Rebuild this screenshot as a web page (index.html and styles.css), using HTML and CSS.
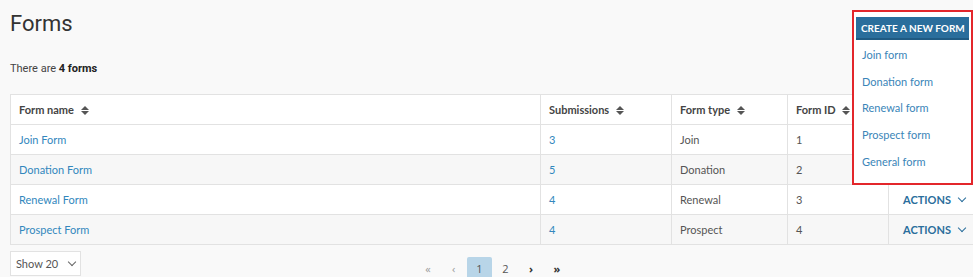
FILE: index.html
```html
<!DOCTYPE html>
<html lang="en">
<head>
    <meta charset="UTF-8">
    <title>Forms</title>
    <link rel="stylesheet" href="styles.css">
</head>
<body>
    <div class="page">
        <div class="top">
            <h1>Forms</h1>
            <div class="new-form">
                <div class="new-form-btn">CREATE A NEW FORM</div>
                <a href="#">Join form</a>
                <a href="#">Donation form</a>
                <a href="#">Renewal form</a>
                <a href="#">Prospect form</a>
                <a href="#">General form</a>
            </div>
        </div>
        <p class="count">There are <strong>4 forms</strong></p>

        <table class="forms">
            <colgroup>
                <col style="width:530px">
                <col style="width:131px">
                <col style="width:116px">
                <col style="width:101px">
                <col style="width:85px">
            </colgroup>
            <thead>
                <tr>
                    <th>Form name <span class="sort"></span></th>
                    <th>Submissions <span class="sort"></span></th>
                    <th>Form type <span class="sort"></span></th>
                    <th>Form ID <span class="sort"></span></th>
                    <th></th>
                </tr>
            </thead>
            <tbody>
                <tr>
                    <td><a href="#">Join Form</a></td>
                    <td><a href="#">3</a></td>
                    <td>Join</td>
                    <td>1</td>
                    <td class="actions">ACTIONS <span class="chev"></span></td>
                </tr>
                <tr>
                    <td><a href="#">Donation Form</a></td>
                    <td><a href="#">5</a></td>
                    <td>Donation</td>
                    <td>2</td>
                    <td class="actions">ACTIONS <span class="chev"></span></td>
                </tr>
                <tr>
                    <td><a href="#">Renewal Form</a></td>
                    <td><a href="#">4</a></td>
                    <td>Renewal</td>
                    <td>3</td>
                    <td class="actions">ACTIONS <span class="chev"></span></td>
                </tr>
                <tr>
                    <td><a href="#">Prospect Form</a></td>
                    <td><a href="#">4</a></td>
                    <td>Prospect</td>
                    <td>4</td>
                    <td class="actions">ACTIONS <span class="chev"></span></td>
                </tr>
            </tbody>
        </table>

        <div class="bottom">
            <div class="show"><span>Show 20</span><span class="chev grey"></span></div>
            <div class="pager">
                <span>&laquo;</span>
                <span>&lsaquo;</span>
                <span class="current">1</span>
                <span class="num">2</span>
                <span class="dark">&rsaquo;</span>
                <span class="dark">&raquo;</span>
            </div>
        </div>
    </div>
</body>
</html>
```

FILE: styles.css
```css
body {
    margin: 0;
    background-color: #f9f9f9;
    font-family: Lato, "Open Sans", Arial, sans-serif;
    color: #555;
    overflow: hidden;
}
.page {
    padding-left: 10px;
    width: 963px;
}
.top {
    position: relative;
    height: 50px;
}
h1 {
    margin: 0;
    padding-top: 11px;
    font-family: Roboto, Arial, sans-serif;
    font-weight: 400;
    font-size: 22px;
    color: #333;
}
.count {
    margin: 12px 0 19px;
    font-family: Roboto, Arial, sans-serif;
    font-size: 11px;
    color: #444;
}
.count strong {
    color: #222;
}
.new-form {
    position: absolute;
    right: 0;
    top: 10px;
    width: 113px;
    height: 166px;
    padding: 5px 2px 0;
    background-color: #fff;
    border: 2px solid #e3262b;
    z-index: 2;
    display: flex;
    flex-direction: column;
}
.new-form-btn {
    background-color: #2a6e9c;
    color: #fff;
    font-size: 10px;
    font-weight: 700;
    height: 21px;
    line-height: 22px;
    padding-left: 5px;
    white-space: nowrap;
    overflow: hidden;
    border-bottom: 2px solid #1f5a82;
}
.new-form a {
    display: block;
    height: 26.7px;
    line-height: 29px;
    padding-left: 6px;
    font-size: 11px;
    color: #3a85b8;
    text-decoration: none;
}
a {
    color: #3287bd;
    text-decoration: none;
}
.forms {
    width: 963px;
    border-collapse: collapse;
    table-layout: fixed;
    background-color: #fff;
    font-size: 11px;
}
.forms th,
.forms td {
    border: 1px solid #e2e2e2;
    height: 29px;
    padding: 0 8px;
    text-align: left;
    white-space: nowrap;
}
.forms th {
    font-weight: 700;
    color: #444;
}
.forms tbody tr:nth-child(even) td {
    background-color: #f7f7f7;
}
.forms td.actions {
    padding-left: 14px;
    font-weight: 700;
    color: #2a6e9c;
}
.sort {
    display: inline-block;
    position: relative;
    width: 8px;
    height: 9px;
    margin-left: 4px;
    vertical-align: -1px;
}
.sort::before,
.sort::after {
    content: "";
    position: absolute;
    left: 0;
    border-left: 4px solid transparent;
    border-right: 4px solid transparent;
}
.sort::before {
    top: 0;
    border-bottom: 4px solid #555;
}
.sort::after {
    bottom: 0;
    border-top: 4px solid #555;
}
.chev {
    display: inline-block;
    width: 5px;
    height: 5px;
    margin-left: 5px;
    border-right: 1.5px solid #2a6e9c;
    border-bottom: 1.5px solid #2a6e9c;
    transform: rotate(45deg);
    vertical-align: 3px;
}
.chev.grey {
    border-color: #666;
    margin: 0 0 3px 0;
}
.bottom {
    position: relative;
    height: 31px;
}
.show {
    width: 59px;
    height: 23px;
    padding: 0 5px 0 5px;
    margin-top: 6px;
    border: 1px solid #e2e2e2;
    background-color: #fff;
    font-size: 11px;
    color: #555;
    display: flex;
    align-items: center;
    justify-content: space-between;
    box-sizing: content-box;
}
.pager {
    position: absolute;
    left: 405px;
    top: 6px;
    display: flex;
    align-items: center;
    font-family: "Open Sans", Arial, sans-serif;
    font-size: 11px;
    color: #999;
}
.pager span {
    width: 25.8px;
    height: 23px;
    line-height: 23px;
    text-align: center;
}
.pager .current {
    background-color: #b8d5e8;
    border-radius: 2px;
    color: #555;
}
.pager .num {
    color: #555;
}
.pager .dark {
    color: #333;
    font-weight: 700;
}
```
